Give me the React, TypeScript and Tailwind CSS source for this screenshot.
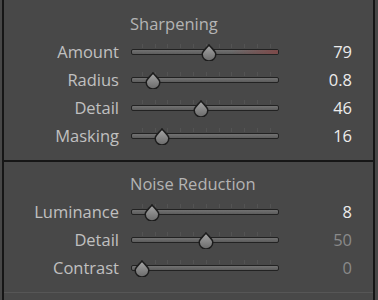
import React from "react";

type Row = {
  label: string;
  value: string;
  pos: number; // thumb position 0..1
  dim?: boolean;
  red?: boolean;
};

const sharpening: Row[] = [
  { label: "Amount", value: "79", pos: 79 / 150, red: true },
  { label: "Radius", value: "0.8", pos: 0.09 },
  { label: "Detail", value: "46", pos: 0.46 },
  { label: "Masking", value: "16", pos: 0.16 },
];

const noise: Row[] = [
  { label: "Luminance", value: "8", pos: 0.08 },
  { label: "Detail", value: "50", pos: 0.5, dim: true },
  { label: "Contrast", value: "0", pos: 0, dim: true },
];

const ticks = [0, 1, 2, 3, 4, 5, 6, 7, 8, 9, 10];

function Thumb() {
  return (
    <svg width="16" height="17" viewBox="0 0 16 17">
      <defs>
        <linearGradient id="thumbFill" x1="0" y1="0" x2="0" y2="1">
          <stop offset="0" stopColor="#a8a8a8" />
          <stop offset="1" stopColor="#6a6a6a" />
        </linearGradient>
      </defs>
      <path
        d="M8 0.8 C9.6 3.4 14.8 7 14.8 10.2 A6.8 6.8 0 0 1 1.2 10.2 C1.2 7 6.4 3.4 8 0.8 Z"
        fill="url(#thumbFill)"
        stroke="#1c1c1c"
        strokeWidth="1.5"
      />
    </svg>
  );
}

function Slider({ row }: { row: Row }) {
  const center = 10.7 + row.pos * 128;
  return (
    <div className="relative w-[148px] h-7 flex items-center">
      {/* tick marks */}
      {ticks.map((t) => (
        <div
          key={t}
          className="absolute top-[6px] w-px h-[4px] bg-[#535353]"
          style={{ left: 10.7 + t * 12.8 }}
        />
      ))}
      <div className="w-full h-[6px] rounded-[2px] border border-[#222] bg-gradient-to-b from-[#727272] to-[#5c5c5c] overflow-hidden flex justify-end">
        {row.red && (
          <div className="w-[46px] h-full bg-gradient-to-r from-transparent to-[#7d4a4a]" />
        )}
      </div>
      <div
        className="absolute top-[6px]"
        style={{ left: center - 8 }}
      >
        <Thumb />
      </div>
    </div>
  );
}

function SliderRow({ row }: { row: Row }) {
  return (
    <div className="flex items-center h-7">
      <div className="w-[115px] text-right text-[#c0c0c0] leading-7">{row.label}</div>
      <div className="ml-[12px]">
        <Slider row={row} />
      </div>
      <div
        className={`w-[73px] text-right leading-7 ${row.dim ? "text-[#8a8a8a]" : "text-[#ececec]"}`}
      >
        {row.value}
      </div>
    </div>
  );
}

export default function App() {
  return (
    <div
      className="w-[378px] h-[300px] bg-[#474747] pl-[2px] pr-[3px] overflow-hidden text-[16.5px]"
      style={{ fontFamily: '"Open Sans", "Noto Sans", sans-serif' }}
    >
      <div className="h-full border-l-2 border-r-2 border-[#161616] bg-[#484848] flex flex-col">
        {/* Sharpening */}
        <div className="pt-[10px] pb-[10px] border-b-2 border-[#161616]">
          <div className="h-7 leading-7 pl-[126px] text-[#b4b4b4]">Sharpening</div>
          {sharpening.map((r) => (
            <SliderRow key={r.label} row={r} />
          ))}
        </div>

        {/* Noise Reduction */}
        <div className="pt-[8px] h-[131px] border-b border-[#565656]">
          <div className="h-7 leading-7 pl-[126px] text-[#b4b4b4]">Noise Reduction</div>
          {noise.map((r) => (
            <SliderRow key={r.label + r.value} row={r} />
          ))}
        </div>
      </div>
    </div>
  );
}
